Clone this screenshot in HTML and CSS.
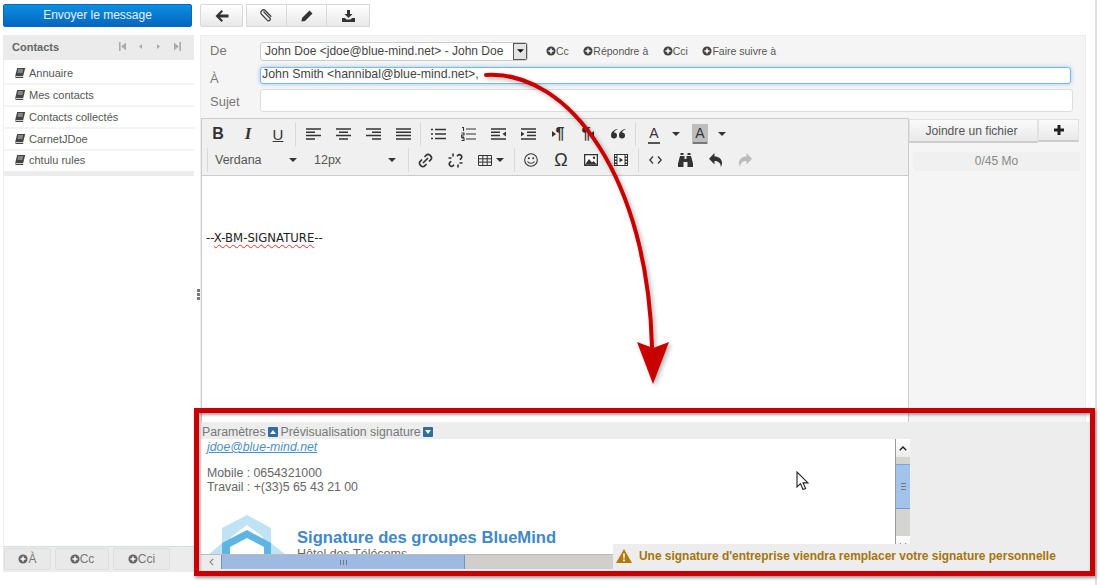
FILE: index.html
```html
<!DOCTYPE html>
<html lang="fr">
<head>
<meta charset="utf-8">
<title>Nouveau message</title>
<link rel="stylesheet" href="styles.css">
</head>
<body>
<svg class="defs" width="0" height="0" aria-hidden="true">
  <defs>
    <symbol id="i-book" viewBox="0 0 12 12"><path d="M3.2 1h8l-2 8H1.2zM1 9.600c0 1 .6 1.400 1.400 1.400H9l.5-1.200H2.600c-.5 0-.8-.1-.8-.4z" fill="currentColor"/><path d="M4 3h5M3.700 5h5" stroke="#fff" stroke-width=".7"/></symbol>
    <symbol id="i-plus" viewBox="0 0 12 12"><circle cx="6" cy="6" r="5.5" fill="currentColor"/><path d="M6 3v6M3 6h6" stroke="#fff" stroke-width="1.8"/></symbol>
    <symbol id="i-caret" viewBox="0 0 8 4"><path d="M0 0h8L4 4z" fill="currentColor"/></symbol>
  </defs>
</svg>
<div class="app">
  <aside class="side">
    <button class="send">Envoyer le message</button>
    <section class="contacts">
      <header class="contacts-head">
        <span>Contacts</span>
        <span class="pager">
          <svg width="9" height="9" viewBox="0 0 9 9"><path d="M1 0h1.600v9H1zM8 .5v8L3.200 4.500z" fill="currentColor"/></svg>
          <svg width="9" height="9" viewBox="0 0 9 9"><path d="M6 2v5L3 4.500z" fill="currentColor"/></svg>
          <svg width="9" height="9" viewBox="0 0 9 9"><path d="M3 2v5l3-2.500z" fill="currentColor"/></svg>
          <svg width="9" height="9" viewBox="0 0 9 9"><path d="M8 0H6.400v9H8zM1 .5v8l4.800-4z" fill="currentColor"/></svg>
        </span>
      </header>
      <ul class="books">
        <li><svg class="book"><use href="#i-book"/></svg>Annuaire</li>
        <li><svg class="book"><use href="#i-book"/></svg>Mes contacts</li>
        <li><svg class="book"><use href="#i-book"/></svg>Contacts collectés</li>
        <li><svg class="book"><use href="#i-book"/></svg>CarnetJDoe</li>
        <li><svg class="book"><use href="#i-book"/></svg>chtulu rules</li>
      </ul>
      <div class="books-fill"></div>
      <footer class="add-bar">
        <button class="add add-a"><svg class="plus"><use href="#i-plus"/></svg>À</button>
        <button class="add add-c"><svg class="plus"><use href="#i-plus"/></svg>Cc</button>
        <button class="add add-c"><svg class="plus"><use href="#i-plus"/></svg>Cci</button>
      </footer>
    </section>
  </aside>

  <div class="splitter"><i></i><i></i><i></i></div>

  <main class="main">
    <div class="actions">
      <button class="act act-back">
        <svg width="14" height="12" viewBox="0 0 14 12"><path d="M6.500 0 8 1.500 5 4.500h8.500v3H5L8 10.500 6.500 12 .5 6z" fill="#333"/></svg>
      </button>
      <div class="act-group">
        <button class="act">
          <svg width="13" height="13" viewBox="0 0 13 13"><path d="M3.500 2.500 9.800 9a1.700 1.700 0 0 1-2.400 2.400L1.500 5.300a2.700 2.700 0 0 1 3.800-3.800l6 6.300" fill="none" stroke="#444" stroke-width="1.300"/></svg>
        </button>
        <button class="act">
          <svg width="12" height="12" viewBox="0 0 12 12"><path d="M8.500.5 11.500 3.500 4 11 .5 11.500 1 8z" fill="#333"/></svg>
        </button>
        <button class="act">
          <svg width="13" height="12" viewBox="0 0 13 12"><path d="M5 0h3v4h2.500l-4 4-4-4H5zM0 8h3l1.500 1.500h4L10 8h3v4H0z" fill="#333"/></svg>
        </button>
      </div>
    </div>

    <section class="compose">
      <div class="fields">
        <div class="field-row row-from">
          <label class="lbl lbl-from">De</label>
          <div class="select">
            <span class="select-text">John Doe &lt;jdoe@blue-mind.net&gt; - John Doe</span>
            <span class="select-btn"><svg width="7" height="4"><use href="#i-caret"/></svg></span>
          </div>
          <div class="extra-links">
            <span class="lnk"><svg class="plus-s"><use href="#i-plus"/></svg>Cc</span>
            <span class="lnk"><svg class="plus-s"><use href="#i-plus"/></svg>Répondre à</span>
            <span class="lnk"><svg class="plus-s"><use href="#i-plus"/></svg>Cci</span>
            <span class="lnk"><svg class="plus-s"><use href="#i-plus"/></svg>Faire suivre à</span>
          </div>
        </div>
        <div class="field-row row-to">
          <label class="lbl lbl-to">À</label>
          <div class="to-input">John Smith &lt;hannibal@blue-mind.net&gt;,</div>
        </div>
        <div class="field-row row-subject">
          <label class="lbl lbl-subject">Sujet</label>
          <div class="subject-input"></div>
        </div>
      </div>

      <div class="work">
        <div class="editor">
          <div class="tb">
            <div class="tb-row tb-row-1">
              <span class="tool tool-t t-b">B</span>
              <span class="tool tool-t t-i">I</span>
              <span class="tool tool-t t-u">U</span>
              <span class="sep"></span>
              <span class="tool"><svg width="15" height="12" viewBox="0 0 15 12" class="lines"><path d="M0 1h15M0 4.300h9M0 7.600h15M0 10.900h9"/></svg></span>
              <span class="tool"><svg width="15" height="12" viewBox="0 0 15 12" class="lines"><path d="M0 1h15M3 4.300h9M0 7.600h15M3 10.900h9"/></svg></span>
              <span class="tool"><svg width="15" height="12" viewBox="0 0 15 12" class="lines"><path d="M0 1h15M6 4.300h9M0 7.600h15M6 10.900h9"/></svg></span>
              <span class="tool"><svg width="15" height="12" viewBox="0 0 15 12" class="lines"><path d="M0 1h15M0 4.300h15M0 7.600h15M0 10.900h15"/></svg></span>
              <span class="sep"></span>
              <span class="tool"><svg width="15" height="12" viewBox="0 0 15 12" class="lines"><path d="M4 1.500h11M4 6h11M4 10.500h11M0 1.500h2M0 6h2M0 10.500h2"/></svg></span>
              <span class="tool"><svg width="15" height="14" viewBox="0 0 15 14" class="lines"><path d="M5 2h10M5 7h10M5 12h10M1 .5h1.500v3.500M.5 6h2.500v2H.5V10H3M.5 11h2.500v2.500H.5" stroke-width="1.100"/></svg></span>
              <span class="tool"><svg width="15" height="12" viewBox="0 0 15 12" class="lines"><path d="M0 1h15M0 4.300h9M0 7.600h9M0 10.900h15"/><path d="M15 3.500v5L11.500 6z" fill="#333" stroke="none"/></svg></span>
              <span class="tool"><svg width="15" height="12" viewBox="0 0 15 12" class="lines"><path d="M0 1h15M6 4.300h9M6 7.600h9M0 10.900h15"/><path d="M0 3.500v5L3.500 6z" fill="#333" stroke="none"/></svg></span>
              <span class="tool tool-t t-para"><svg width="4" height="6" viewBox="0 0 4 6"><path d="M0 0v6l4-3z" fill="#333"/></svg>¶</span>
              <span class="tool tool-t t-para">¶<svg width="4" height="6" viewBox="0 0 4 6"><path d="M4 0v6L0 3z" fill="#333"/></svg></span>
              <span class="tool"><svg width="15" height="10" viewBox="0 0 15 10"><path d="M6.500 0C3 .8 0 3 0 6.500a3 3 0 1 0 3-3c.3-1.200 1.500-2.300 3.500-3zM14.500 0C11 .8 8 3 8 6.500a3 3 0 1 0 3-3c.3-1.200 1.500-2.300 3.500-3z" fill="#333"/></svg></span>
              <span class="sep sep-color"></span>
              <span class="tool tool-color"><span class="color-a">A</span></span>
              <span class="caret-tool"><svg width="8" height="4"><use href="#i-caret"/></svg></span>
              <span class="tool tool-color tool-bg"><span class="color-a">A</span></span>
              <span class="caret-tool"><svg width="8" height="4"><use href="#i-caret"/></svg></span>
            </div>
            <div class="tb-row tb-row-2">
              <span class="sep sep-start"></span>
              <span class="combo combo-font">Verdana<svg width="8" height="4"><use href="#i-caret"/></svg></span>
              <span class="combo combo-size">12px<svg width="8" height="4"><use href="#i-caret"/></svg></span>
              <span class="sep"></span>
              <span class="tool"><svg width="15" height="15" viewBox="0 0 15 15"><path d="M6.500 4 8.300 2.200a2.500 2.500 0 0 1 3.600 0l.9.900a2.500 2.500 0 0 1 0 3.600L11 8.500M8.500 11l-1.800 1.800a2.500 2.500 0 0 1-3.600 0l-.9-.9a2.500 2.500 0 0 1 0-3.600L4 6.500M5 10l5-5" fill="none" stroke="#333" stroke-width="1.700"/></svg></span>
              <span class="tool"><svg width="15" height="15" viewBox="0 0 15 15"><path d="M9 3.200 9.800 2.400a2.300 2.300 0 0 1 3.200 0 2.300 2.300 0 0 1 0 3.200L11.800 6.800M3.200 8.200 2 9.400a2.300 2.300 0 0 0 0 3.200 2.300 2.300 0 0 0 3.200 0L6 11.800M5 .5v3M.5 5h3M10 14.500v-3M14.500 10h-3" fill="none" stroke="#333" stroke-width="1.600"/></svg></span>
              <span class="tool tool-table"><svg width="14" height="11" viewBox="0 0 14 11" class="grid"><path d="M.5.500h13v10H.5zM.5 3.800h13M.5 7.100h13M4.800.5v10M9.200.5v10"/></svg><svg width="8" height="4"><use href="#i-caret"/></svg></span>
              <span class="sep"></span>
              <span class="tool"><svg width="14" height="14" viewBox="0 0 14 14"><circle cx="7" cy="7" r="6.300" fill="none" stroke="#333" stroke-width="1.100"/><circle cx="4.800" cy="5.300" r="1" fill="#333"/><circle cx="9.200" cy="5.300" r="1" fill="#333"/><path d="M3.500 8.500c1.500 2.400 5.500 2.400 7 0" fill="none" stroke="#333" stroke-width="1.100"/></svg></span>
              <span class="tool tool-t t-omega">Ω</span>
              <span class="tool"><svg width="14" height="12" viewBox="0 0 14 12"><path d="M0 0h14v12H0z" fill="#333"/><path d="M1.300 1.300h11.400v9H1.300z" fill="#fff"/><path d="M1.300 10.300 5 5l3 3.500 1.500-1.500 3.200 3.300z" fill="#333"/><circle cx="10" cy="3.800" r="1.200" fill="#333"/></svg></span>
              <span class="tool"><svg width="14" height="12" viewBox="0 0 14 12"><path d="M0 0h14v12H0z" fill="#333"/><path d="M1 1h1.500v1.500H1zM1 4h1.500v1.500H1zM1 7h1.500v1.500H1zM1 10h1.500v1H1zM11.500 1H13v1.500h-1.500zM11.500 4H13v1.500h-1.500zM11.500 7H13v1.500h-1.500zM11.500 10H13v1h-1.500zM3.500 1h7v10h-7z" fill="#fff"/><path d="M5.500 3.500v5L9 6z" fill="#333"/></svg></span>
              <span class="sep"></span>
              <span class="tool"><svg width="13" height="8" viewBox="0 0 13 8"><path d="M4 .5.800 4 4 7.500M9 .5 12.200 4 9 7.500" fill="none" stroke="#333" stroke-width="1.300"/></svg></span>
              <span class="tool"><svg width="15" height="14" viewBox="0 0 15 14"><path d="M2.500 0h3v2h-3zM9.500 0h3v2h-3zM2 3h4.500v3h2V3H13l2 7.500V14H9.500V9h-4v5H0v-3.500z" fill="#333"/></svg></span>
              <span class="tool"><svg width="13" height="14" viewBox="0 0 13 14"><path d="M5.500 0v3.500C9.800 3.500 13 6 13 10c0 1.500-.5 3-1.300 4 .3-3.500-2-6-6.200-6v3.500L0 5.700z" fill="#333"/></svg></span>
              <span class="tool tool-off"><svg width="13" height="14" viewBox="0 0 13 14"><path d="M7.500 0v3.500C3.200 3.500 0 6 0 10c0 1.500.5 3 1.300 4C1 10.500 3.300 8 7.500 8v3.500L13 5.700z" fill="#bbb"/></svg></span>
            </div>
          </div>
          <div class="editor-body">
            <p class="sig-mark">--<span class="typo">X-BM-SIGNATURE</span>--</p>
          </div>
        </div>

        <aside class="attach">
          <div class="attach-btns">
            <button class="join">Joindre un fichier</button>
            <button class="join-plus">
              <svg width="10" height="10" viewBox="0 0 10 10"><path d="M3.500 0h3v3.500H10v3H6.500V10h-3V6.500H0v-3h3.500z" fill="#222"/></svg>
            </button>
          </div>
          <div class="quota">0/45 Mo</div>
        </aside>
      </div>

      <div class="sig-zone">
        <div class="sig-left">
          <div class="sig-tabs">
            <span>Paramètres</span>
            <span class="tab-ic"><svg width="6" height="4"><path d="M0 4h6L3 0z" fill="#fff"/></svg></span>
            <span>Prévisualisation signature</span>
            <span class="tab-ic"><svg width="6" height="4"><path d="M0 0h6L3 4z" fill="#fff"/></svg></span>
          </div>
          <div class="sig-view">
            <div class="sig-content">
              <a class="sig-mail">jdoe@blue-mind.net</a>
              <p class="sig-tel">Mobile : 0654321000<br>Travail : +(33)5 65 43 21 00</p>
              <div class="sig-org">
                <svg class="sig-logo" width="80" height="52" viewBox="0 0 80 52">
                  <path d="M1 40 15 28V13L40 0l24 13v15l15 12z" fill="#bfe3f5"/>
                  <path d="M24 22 40 10l16 12v6H24z" fill="#fff"/>
                  <path d="M15 52V28L40 15l24 13v24z" fill="#5db5e3"/>
                  <path d="M23 52V32l17-9 17 9v20z" fill="#fff"/>
                </svg>
                <div class="sig-org-text">
                  <div class="sig-title">Signature des groupes BlueMind</div>
                  <div class="sig-addr">Hôtel des Télécoms</div>
                </div>
              </div>
            </div>
            <div class="vbar">
              <span class="v-btn"><svg width="8" height="5" viewBox="0 0 8 5"><path d="M.8 4.200 4 1l3.200 3.200" fill="none" stroke="#222" stroke-width="1.400"/></svg></span>
              <span class="v-track"><span class="v-thumb"><i></i></span></span>
              <span class="v-btn v-btn-end"><svg width="8" height="5" viewBox="0 0 8 5"><path d="M.8.800 4 4 7.200.8" fill="none" stroke="#222" stroke-width="1.400"/></svg></span>
            </div>
          </div>
          <div class="hbar">
            <span class="h-btn"><svg width="5" height="8" viewBox="0 0 5 8"><path d="M4.200.8 1 4l3.200 3.200" fill="none" stroke="#888" stroke-width="1.100"/></svg></span>
            <span class="h-thumb"><i></i></span>
          </div>
        </div>
        <div class="sig-right"></div>
      </div>
    </section>
  </main>
  <div class="edge"></div>
</div>

<div class="frame"></div>
<svg class="arrow" width="200" height="320" viewBox="0 0 200 320">
  <path d="M6 11C90 6 168 116 172 283" fill="none" stroke="#c80000" stroke-width="4" stroke-linecap="round"/>
  <path d="M157 278 L173 284 L189 278 L173 320z" fill="#c80000"/>
</svg>
<div class="warning">
  <svg width="16" height="14" viewBox="0 0 16 14"><path d="M8 0 16 14H0z" fill="#b37a08"/><path d="M7.100 4.500h1.800l-.3 5H7.400zM7.100 10.500h1.800v1.700H7.100z" fill="#fff"/></svg>
  <span>Une signature d'entreprise viendra remplacer votre signature personnelle</span>
</div>
<svg class="cursor" width="14" height="20" viewBox="0 0 14 20"><path d="M1 1v15l3.500-3.300L7 18.500l2.600-1.100-2.500-5.500H12z" fill="#fff" stroke="#222" stroke-width="1.100"/></svg>
</body>
</html>
```
FILE: styles.css
```css
* { box-sizing: border-box; }
html, body { margin: 0; padding: 0; height: 100%; }
body {
  position: relative;
  width: 1100px;
  height: 585px;
  overflow: hidden;
  background: #fff;
  font-family: "Liberation Sans", Arial, sans-serif;
  color: #555;
  font-size: 12px;
}
.defs { position: absolute; }
button { font-family: inherit; padding: 0; margin: 0; cursor: default; }
.app {
  display: flex;
  height: 585px;
  padding: 4px 0 0 3px;
}
.side { width: 191px; flex: none; display: flex; flex-direction: column; }
.send {
  height: 23px;
  width: 189px;
  border: 1px solid #0a66b8;
  border-radius: 2px;
  background: linear-gradient(#0a8fe0, #0566c0);
  color: #e8f2fb;
  font-size: 12px;
  padding-bottom: 2px;
}
.contacts { margin-top: 8px; height: 537px; display: flex; flex-direction: column; }
.contacts-head {
  height: 25px;
  flex: none;
  background: #ebebeb;
  display: flex;
  align-items: center;
  justify-content: space-between;
  padding: 0 12.5px 2px 9px;
  font-size: 11px;
  font-weight: bold;
  color: #666;
}
.pager { display: flex; gap: 9.3px; color: #aaa; }
.books {
  list-style: none;
  margin: 0;
  padding: 3px 0 0;
  border-left: 1px solid #eee;
  flex: none;
}
.books li {
  height: 22px;
  display: flex;
  align-items: center;
  padding-left: 10px;
  font-size: 11px;
  color: #555;
  border-bottom: 2px solid #f4f4f4;
}
.books li:last-child { border-bottom: 5px solid #ececec; height: 25px; padding-bottom: 2px; }
.book { width: 12px; height: 12px; margin-right: 3px; color: #444; flex: none; }
.books-fill { flex: 1; border-left: 1px solid #eee; }
.add-bar {
  height: 26px;
  flex: none;
  background: #ececec;
  border-top: 1px solid #d5dfe0;
  display: flex;
  gap: 4px;
  padding: 1px 0 0 1px;
}
.add {
  height: 22px;
  background: #e9e9e9;
  border: 1px solid #dedede;
  border-radius: 2px;
  color: #777;
  font-size: 12px;
  display: flex;
  align-items: center;
  justify-content: center;
}
.add-a { width: 47px; }
.add-c { width: 54px; }
.add-c:last-child { width: 57px; }
.plus { width: 10px; height: 10px; color: #666; }
.splitter {
  width: 6px;
  flex: none;
  display: flex;
  flex-direction: column;
  align-self: flex-start;
  gap: 1px;
  margin-top: 285px;
  padding-left: 3px;
}
.splitter i { display: block; width: 3px; height: 3px; background: #777; }
.main { width: 886px; flex: none; }
.edge { width: 2px; height: 589px; margin: -4px 0 0 9px; flex: none; background: #e0e0e0; }
.actions { display: flex; gap: 3px; height: 23px; }
.act {
  width: 41px;
  height: 23px;
  background: linear-gradient(#fff, #e8e8e8);
  border: 1px solid #d8d8d8;
  border-radius: 2px;
  display: flex;
  align-items: center;
  justify-content: center;
  padding: 0;
}
.act-back { width: 43px; }
.act-group { display: flex; }
.act-group .act { border-radius: 0; margin-left: -1px; }
.act-group .act:first-child { margin-left: 0; width: 41px; }
.act-group .act:last-child { width: 44px; }
.compose {
  margin-top: 8px;
  height: 537px;
  background: #f5f5f5;
  border: 1px solid #ececec;
  border-bottom: 0;
  display: flex;
  flex-direction: column;
}
.fields { height: 82px; flex: none; padding-top: 5px; }
.field-row { display: flex; align-items: center; }
.lbl { width: 50px; padding-left: 9px; font-size: 13px; color: #777; flex: none; }
.lbl-from { padding-bottom: 2px; }
.lbl-to { padding-top: 7px; }
.lbl-subject { padding-top: 2px; }
.row-from { height: 20px; }
.row-to { height: 18px; margin-top: 5px; }
.row-subject { height: 23px; margin-top: 5px; }
.select {
  margin-left: 9px;
  width: 268px;
  height: 19px;
  background: #fff;
  border: 1px solid #ccc;
  border-radius: 3px;
  display: flex;
  align-items: center;
  justify-content: space-between;
  padding: 0 0 0 4px;
  font-size: 12px;
  color: #444;
  white-space: nowrap;
  overflow: hidden;
}
.select-btn {
  width: 14px;
  height: 17px;
  background: #e4e4e4;
  border: 1px solid #555;
  display: flex;
  align-items: center;
  justify-content: center;
  color: #111;
  flex: none;
}
.extra-links { display: flex; gap: 14.5px; margin-left: 18px; font-size: 10.5px; color: #555; padding-bottom: 1px; }
.lnk { display: flex; align-items: center; white-space: nowrap; }
.plus-s { width: 10px; height: 10px; color: #444; }
.to-input {
  margin-left: 9px;
  width: 811px;
  height: 17px;
  background: #fff;
  border: 1px solid #7db8e8;
  border-radius: 3px;
  box-shadow: 0 0 4px rgba(90, 170, 240, .6);
  font-size: 12.33px;
  color: #444;
  padding-left: 1px;
  line-height: 13px;
  white-space: nowrap;
}
.subject-input {
  margin-left: 9px;
  width: 813px;
  height: 23px;
  background: #fff;
  border: 1px solid #ddd;
  border-radius: 3px;
}
.work { display: flex; height: 304px; flex: none; }
.editor { width: 708px; flex: none; display: flex; flex-direction: column; }
.tb {
  height: 58px;
  flex: none;
  background: #f0f0f0;
  border: 1px solid #ccc;
  padding-top: 1px;
}
.tb-row { display: flex; align-items: center; }
.tb-row-1 { padding-left: 1px; height: 28px; }
.tb-row-2 { height: 24px; }
.tool {
  width: 30px;
  height: 24px;
  flex: none;
  display: flex;
  align-items: center;
  justify-content: center;
  color: #333;
}
.tool-t { font-size: 15px; }
.t-b { font-weight: bold; font-size: 16px; }
.t-i { font-family: "Liberation Serif", serif; font-style: italic; font-weight: bold; font-size: 17px; }
.t-u { text-decoration: underline; }
.t-para { font-size: 16px; font-weight: bold; }
.t-omega { font-size: 18px; }
.lines { fill: none; stroke: #333; stroke-width: 1.5; }
.grid { fill: none; stroke: #333; stroke-width: 1; }
.sep { width: 1px; height: 24px; background: #d9d9d9; flex: none; margin: 0 2px; }
.tb-row-2 .sep { margin: 0 1px 0 2px; }
.tb-row-2 .sep-start { margin: 0 7px 0 5px; }
.sep-color { margin-right: 6px; }
.tool-color { width: 24px; }
.tool-bg { width: 16px; height: 20px; background: #bdbdbd; }
.color-a {
  font-size: 14px;
  color: #333;
  border-bottom: 2px solid #555;
  padding: 0 1px;
  line-height: 18px;
}
.tool-bg .color-a { border-bottom-color: #777; padding: 0 2px; }
.caret-tool { width: 26px; display: flex; color: #333; flex: none; padding-left: 6px; }
.tool-bg + .caret-tool { width: 24px; padding-left: 10px; }
.combo {
  display: flex;
  align-items: center;
  justify-content: space-between;
  color: #555;
  font-size: 12.5px;
  flex: none;
}
.combo svg { color: #333; }
.combo-font { width: 82px; margin-right: 17px; }
.combo-size { width: 82px; margin-right: 10px; }
.tool-table { gap: 4px; width: 42px; justify-content: flex-start; padding-left: 8px; }
.tool-table svg:last-child { color: #333; }
.tool-off { color: #bbb; }
.editor-body {
  flex: 1;
  background: #fff;
  border-left: 1px solid #ccc;
  border-right: 1px solid #ccc;
  padding-top: 55px;
}
.sig-mark {
  margin: 0 0 0 4px;
  font-family: "DejaVu Sans", Verdana, sans-serif;
  font-size: 11.7px;
  color: #222;
}
.typo { text-decoration: underline wavy #e03030 1px; text-underline-offset: 2px; }
.attach { flex: 1; padding-top: 1px; }
.attach-btns { display: flex; height: 24px; }
.join {
  width: 129px;
  height: 24px;
  background: linear-gradient(#fafafa, #e9e9e9);
  border: 1px solid #e2e2e2;
  border-bottom: 2px solid #ccc;
  color: #555;
  font-size: 12.1px;
  padding-right: 4px;
}
.join-plus {
  width: 41px;
  height: 23px;
  background: linear-gradient(#fafafa, #e9e9e9);
  border: 1px solid #e2e2e2;
  border-bottom: 2px solid #ccc;
}
.quota {
  margin: 9px 5px 0 4px;
  height: 19px;
  border-radius: 3px;
  background: #f0f0f0;
  text-align: center;
  line-height: 19px;
  color: #888;
  font-size: 12px;
}
.sig-zone { display: flex; flex: 1; background: #ededed; margin-right: -5px; }
.sig-left { width: 709px; flex: none; display: flex; flex-direction: column; min-height: 0; }
.sig-tabs {
  height: 17px;
  flex: none;
  display: flex;
  align-items: center;
  gap: 2.5px;
  font-size: 12.3px;
  color: #777;
  padding: 2px 0 0 1px;
}
.tab-ic {
  width: 10px;
  height: 10px;
  background: #2f6f9f;
  border-radius: 1px;
  display: flex;
  align-items: center;
  justify-content: center;
}
.sig-view { height: 115px; flex: none; background: #fff; display: flex; overflow: hidden; }
.sig-content { flex: 1; padding: 1px 0 0 6px; min-width: 0; font-size: 12.3px; color: #666; overflow: hidden; }
.sig-mail { display: block; color: #4a90c8; font-style: italic; text-decoration: underline; line-height: 15px; }
.sig-tel { margin: 11px 0 0; line-height: 14px; }
.sig-org { display: flex; margin-top: 21px; }
.sig-logo { flex: none; }
.sig-org-text { margin-left: 10px; padding-top: 13px; }
.sig-title { font-size: 16.6px; font-weight: bold; color: #3f88c8; line-height: 20px; }
.sig-addr { font-size: 12.5px; line-height: 13px; }
.vbar { width: 15px; flex: none; background: #d4d4d2; border-left: 1px solid #999; display: flex; flex-direction: column; }
.v-btn { height: 18px; background: linear-gradient(#fff, #ececec); display: flex; align-items: center; justify-content: center; flex: none; }
.v-track { flex: 1; padding-top: 7px; }
.v-thumb {
  display: flex;
  align-items: center;
  justify-content: center;
  height: 45px;
  background: #a3c4ea;
  border-top: 1px solid #7ba3d3;
  border-bottom: 1px solid #6f9bd0;
}
.v-thumb i { width: 5px; height: 7px; background: repeating-linear-gradient(#778 0 1px, transparent 1px 3px); }
.hbar { height: 15px; flex: none; background: #d0cfcc; display: flex; border-top: 1px solid #bbb; }
.h-btn { width: 20px; background: #ececec; display: flex; align-items: center; justify-content: center; }
.h-thumb {
  width: 244px;
  background: #9dbbe2;
  border-left: 1px solid #6d95c8;
  border-right: 1px solid #6d95c8;
  display: flex;
  align-items: center;
  justify-content: center;
}
.h-thumb i { width: 7px; height: 5px; background: repeating-linear-gradient(90deg, #778 0 1px, transparent 1px 3px); }
.sig-right { flex: 1; }
/* annotations laid over the screenshot */
.frame {
  position: absolute;
  left: 194px;
  top: 408px;
  width: 901px;
  height: 168px;
  border: 5px solid #c80000;
  box-shadow: 1px 2px 3px rgba(0, 0, 0, .4), inset 1px 2px 3px rgba(0, 0, 0, .35);
}
.arrow {
  position: absolute;
  left: 480px;
  top: 64px;
  filter: drop-shadow(2px 2px 2px rgba(0, 0, 0, .3));
}
.warning {
  position: absolute;
  left: 613px;
  top: 544px;
  width: 452px;
  height: 26px;
  background: #ededed;
  display: flex;
  align-items: center;
  gap: 7px;
  padding: 0 0 2px 3px;
  font-size: 11.95px;
  font-weight: bold;
  color: #a4750f;
  white-space: nowrap;
}
.cursor { position: absolute; left: 796px; top: 471px; }
```
